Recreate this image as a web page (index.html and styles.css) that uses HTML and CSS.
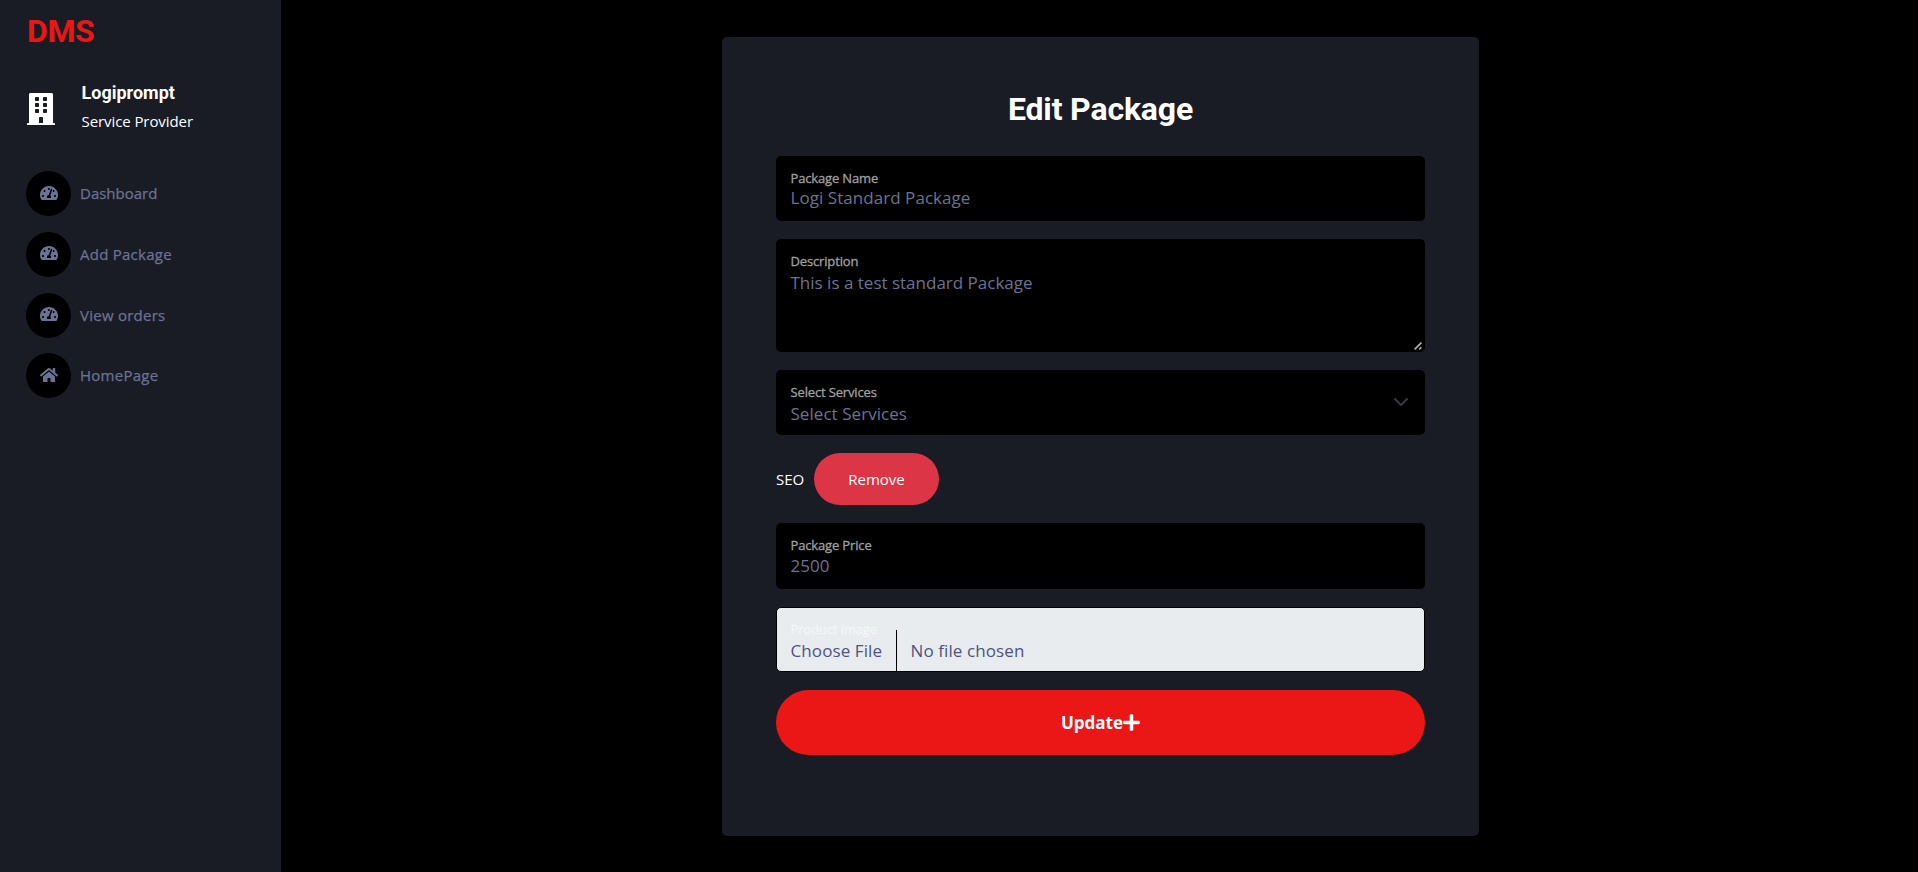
FILE: index.html
```html
<!DOCTYPE html>
<html lang="en">
<head>
<meta charset="utf-8">
<title>Edit Package</title>
<link rel="stylesheet" href="styles.css">
</head>
<body>
<svg class="defs" aria-hidden="true">
  <symbol id="gauge" viewBox="0 0 576 512"><path fill-rule="evenodd" d="M288 32C128.940 32 0 160.940 0 320c0 52.800 14.250 102.260 39.060 144.800 5.610 9.620 16.300 15.200 27.440 15.200h443c11.140 0 21.830-5.580 27.440-15.200C561.750 422.260 576 372.800 576 320c0-159.060-128.940-288-288-288zm0 64c14.710 0 26.580 10.130 30.320 23.650-1.110 2.260-2.640 4.230-3.450 6.670l-9.220 27.670c-5.130 3.490-10.970 6.010-17.640 6.010-17.670 0-32-14.330-32-32S270.330 96 288 96zM96 384c-17.670 0-32-14.330-32-32s14.330-32 32-32 32 14.330 32 32-14.330 32-32 32zm48-160c-17.670 0-32-14.330-32-32s14.330-32 32-32 32 14.330 32 32-14.330 32-32 32zm246.770-72.410l-61.330 184C343.130 347.330 352 364.540 352 384c0 11.720-3.380 22.550-8.880 32H232.880c-5.500-9.450-8.880-20.280-8.880-32 0-33.940 26.500-61.430 59.900-63.590l61.340-184.010c4.170-12.560 17.730-19.450 30.360-15.170 12.570 4.190 19.350 17.790 15.170 30.360zm14.660 57.200l15.520-46.550c3.470-1.290 7.130-2.230 11.050-2.230 17.670 0 32 14.330 32 32s-14.330 32-32 32c-11.380-.01-21.250-6.100-26.570-15.220zM480 384c-17.670 0-32-14.330-32-32s14.330-32 32-32 32 14.330 32 32-14.330 32-32 32z"/></symbol>
</svg>
<div class="layout">
  <aside class="sidebar">
    <div class="brand">DMS</div>
    <div class="profile">
      <svg class="building" viewBox="0 0 448 512"><path d="M436 480h-20V24c0-13.255-10.745-24-24-24H56C42.745 0 32 10.745 32 24v456H12c-6.627 0-12 5.373-12 12v20h448v-20c0-6.627-5.373-12-12-12zM128 76c0-6.627 5.373-12 12-12h40c6.627 0 12 5.373 12 12v40c0 6.627-5.373 12-12 12h-40c-6.627 0-12-5.373-12-12V76zm0 96c0-6.627 5.373-12 12-12h40c6.627 0 12 5.373 12 12v40c0 6.627-5.373 12-12 12h-40c-6.627 0-12-5.373-12-12v-40zm52 148h-40c-6.627 0-12-5.373-12-12v-40c0-6.627 5.373-12 12-12h40c6.627 0 12 5.373 12 12v40c0 6.627-5.373 12-12 12zm76 160h-64v-84c0-6.627 5.373-12 12-12h40c6.627 0 12 5.373 12 12v84zm64-172c0 6.627-5.373 12-12 12h-40c-6.627 0-12-5.373-12-12v-40c0-6.627 5.373-12 12-12h40c6.627 0 12 5.373 12 12v40zm0-96c0 6.627-5.373 12-12 12h-40c-6.627 0-12-5.373-12-12v-40c0-6.627 5.373-12 12-12h40c6.627 0 12 5.373 12 12v40zm0-96c0 6.627-5.373 12-12 12h-40c-6.627 0-12-5.373-12-12V76c0-6.627 5.373-12 12-12h40c6.627 0 12 5.373 12 12v40z"/></svg>
      <div class="who"><div class="name">Logiprompt</div><div class="role">Service Provider</div></div>
    </div>
    <nav class="menu">
      <a class="item"><span class="dot"><svg viewBox="0 0 576 512"><use href="#gauge"/></svg></span><span class="text">Dashboard</span></a>
      <a class="item wide"><span class="dot"><svg class="up" viewBox="0 0 576 512"><use href="#gauge"/></svg></span><span class="text">Add Package</span></a>
      <a class="item wide"><span class="dot"><svg class="up" viewBox="0 0 576 512"><use href="#gauge"/></svg></span><span class="text">View orders</span></a>
      <a class="item wide last"><span class="dot"><svg viewBox="0 0 576 512"><path d="M280.370 148.260L96 300.110V464a16 16 0 0 0 16 16l112.060-.29a16 16 0 0 0 15.920-16V368a16 16 0 0 1 16-16h64a16 16 0 0 1 16 16v95.640a16 16 0 0 0 16 16.050L464 480a16 16 0 0 0 16-16V300L295.670 148.260a12.190 12.190 0 0 0-15.300 0zM571.600 251.470L488 182.560V44.050a12 12 0 0 0-12-12h-56a12 12 0 0 0-12 12v72.610L318.470 43a48 48 0 0 0-61 0L4.340 251.470a12 12 0 0 0-1.600 16.900l25.500 31A12 12 0 0 0 45.150 301l235.220-193.740a12.190 12.190 0 0 1 15.300 0L530.900 301a12 12 0 0 0 16.900-1.600l25.500-31a12 12 0 0 0-1.700-16.930z"/></svg></span><span class="text">HomePage</span></a>
    </nav>
  </aside>
  <main class="content">
    <form class="card">
      <h1 class="title">Edit Package</h1>
      <div class="field"><label class="label">Package Name</label><div class="value tight">Logi Standard Package</div></div>
      <div class="field area"><label class="label">Description</label><div class="value plain">This is a test standard Package</div>
        <svg class="grip" viewBox="0 0 8 8"><path d="M.6 7.400 7.400.6M5.200 7.400 7.400 5.200"/></svg></div>
      <div class="field"><label class="label">Select Services</label><div class="value">Select Services</div>
        <svg class="chevron" viewBox="0 0 16 16"><path d="m2 5 6 6 6-6"/></svg></div>
      <div class="service"><span class="tag">SEO</span><button type="button" class="remove">Remove</button></div>
      <div class="field price"><label class="label">Package Price</label><div class="value mid">2500</div></div>
      <div class="field file"><label class="label">Product Image</label>
        <div class="picker"><span class="choose">Choose File</span><span class="none">No file chosen</span></div></div>
      <button type="button" class="update">Update<svg viewBox="0 0 448 512"><path d="M416 208H272V64c0-17.670-14.330-32-32-32h-32c-17.670 0-32 14.330-32 32v144H32c-17.670 0-32 14.330-32 32v32c0 17.670 14.330 32 32 32h144v144c0 17.670 14.330 32 32 32h32c17.670 0 32-14.330 32-32V304h144c17.670 0 32-14.330 32-32v-32c0-17.670-14.330-32-32-32z"/></svg></button>
    </form>
  </main>
</div>
</body>
</html>
```
FILE: styles.css
```css
* { box-sizing: border-box; }
body { margin: 0; background: #000; color: #fff; font-family: "Open Sans", "Noto Sans", sans-serif; font-size: 15px; }
.defs { display: none; }
.layout { display: flex; height: 872px; overflow: hidden; }
.sidebar { width: 281px; background: #191c24; }
.brand { padding: 11px 0 0 27px; font: 700 32px/40px Roboto, sans-serif; letter-spacing: -.4px; color: #eb1616; }
.profile { display: flex; padding: 28px 0 0 27px; }
.building { width: 28px; height: 32px; margin-top: 14px; fill: #fff; }
.who { padding-left: 26.500px; }
.name { font: 700 18px/27px Roboto, sans-serif; }
.role { line-height: 30px; letter-spacing: -.08px; }
.menu { padding: 35px 0 0 26px; }
.item { display: flex; align-items: center; gap: 9px; height: 45px; margin-bottom: 16px; color: #6c7293; -webkit-text-stroke: .25px #6c7293; }
.wide { letter-spacing: .25px; }
.item.last { margin-top: -1px; }
.dot { display: flex; align-items: center; justify-content: center; width: 45px; height: 45px; border-radius: 50%; background: #000; }
.dot svg { width: 18px; height: 16px; margin-bottom: 2px; fill: #6c7293; }
.dot .up { margin-bottom: 4px; }
.text { padding-bottom: 1px; }
.content { flex: 1; display: flex; justify-content: center; padding: 37px 0 0 2px; }
.card { width: 757px; height: 799px; padding: 48px 54px 0; background: #191c24; border-radius: 5px; }
.title { margin: 0 0 23px; text-align: center; font: 700 32px/48px Roboto, sans-serif; letter-spacing: -.15px; }
.field { position: relative; height: 65px; margin-bottom: 18px; padding: 12px 15px 0 14.500px; background: #000; border-radius: 5px; }
.area { height: 113px; }
.price { height: 66px; }
.label { display: block; font-size: 13px; line-height: 20px; letter-spacing: -.15px; color: #a0a0a0; -webkit-text-stroke: .3px currentColor; }
.value { font-size: 17px; line-height: 23px; letter-spacing: .05px; color: #6c7293; }
.plain { letter-spacing: 0; }
.tight { line-height: 19px; }
.mid { line-height: 21px; }
.grip { position: absolute; right: 3px; bottom: 2px; width: 8px; height: 8px; fill: none; stroke: #b4b4b4; stroke-width: 1.5; }
.chevron { position: absolute; right: 16px; top: 24px; width: 16px; height: 16px; fill: none; stroke: #343a40; stroke-width: 2; stroke-linecap: round; stroke-linejoin: round; }
.service { display: flex; align-items: center; gap: 9px; height: 52px; margin-bottom: 18px; }
.tag { width: 29px; }
.remove { width: 125px; height: 52px; padding: 0; border: 0; border-radius: 26px; background: #dc3545; color: #fff; font: inherit; }
.file { padding: 11px 14px 0 13.500px; background: #e9ecef; border: 1px solid #000; }
.file .label { color: #f4f5f6; }
.picker { display: flex; height: 41px; margin-top: -9px; font-size: 17px; line-height: 23px; letter-spacing: .1px; color: #4d5382; }
.choose { width: 106.500px; padding-top: 9px; border-right: 1px solid #000; }
.none { padding: 9px 0 0 13.500px; }
.update { display: flex; align-items: center; justify-content: center; width: 649px; height: 65px; padding: 0; border: 0; border-radius: 33px; background: #eb1616; color: #fff; font: 700 17px/24px "Open Sans", sans-serif; }
.update svg { width: 17px; height: 19px; fill: #fff; }
```
